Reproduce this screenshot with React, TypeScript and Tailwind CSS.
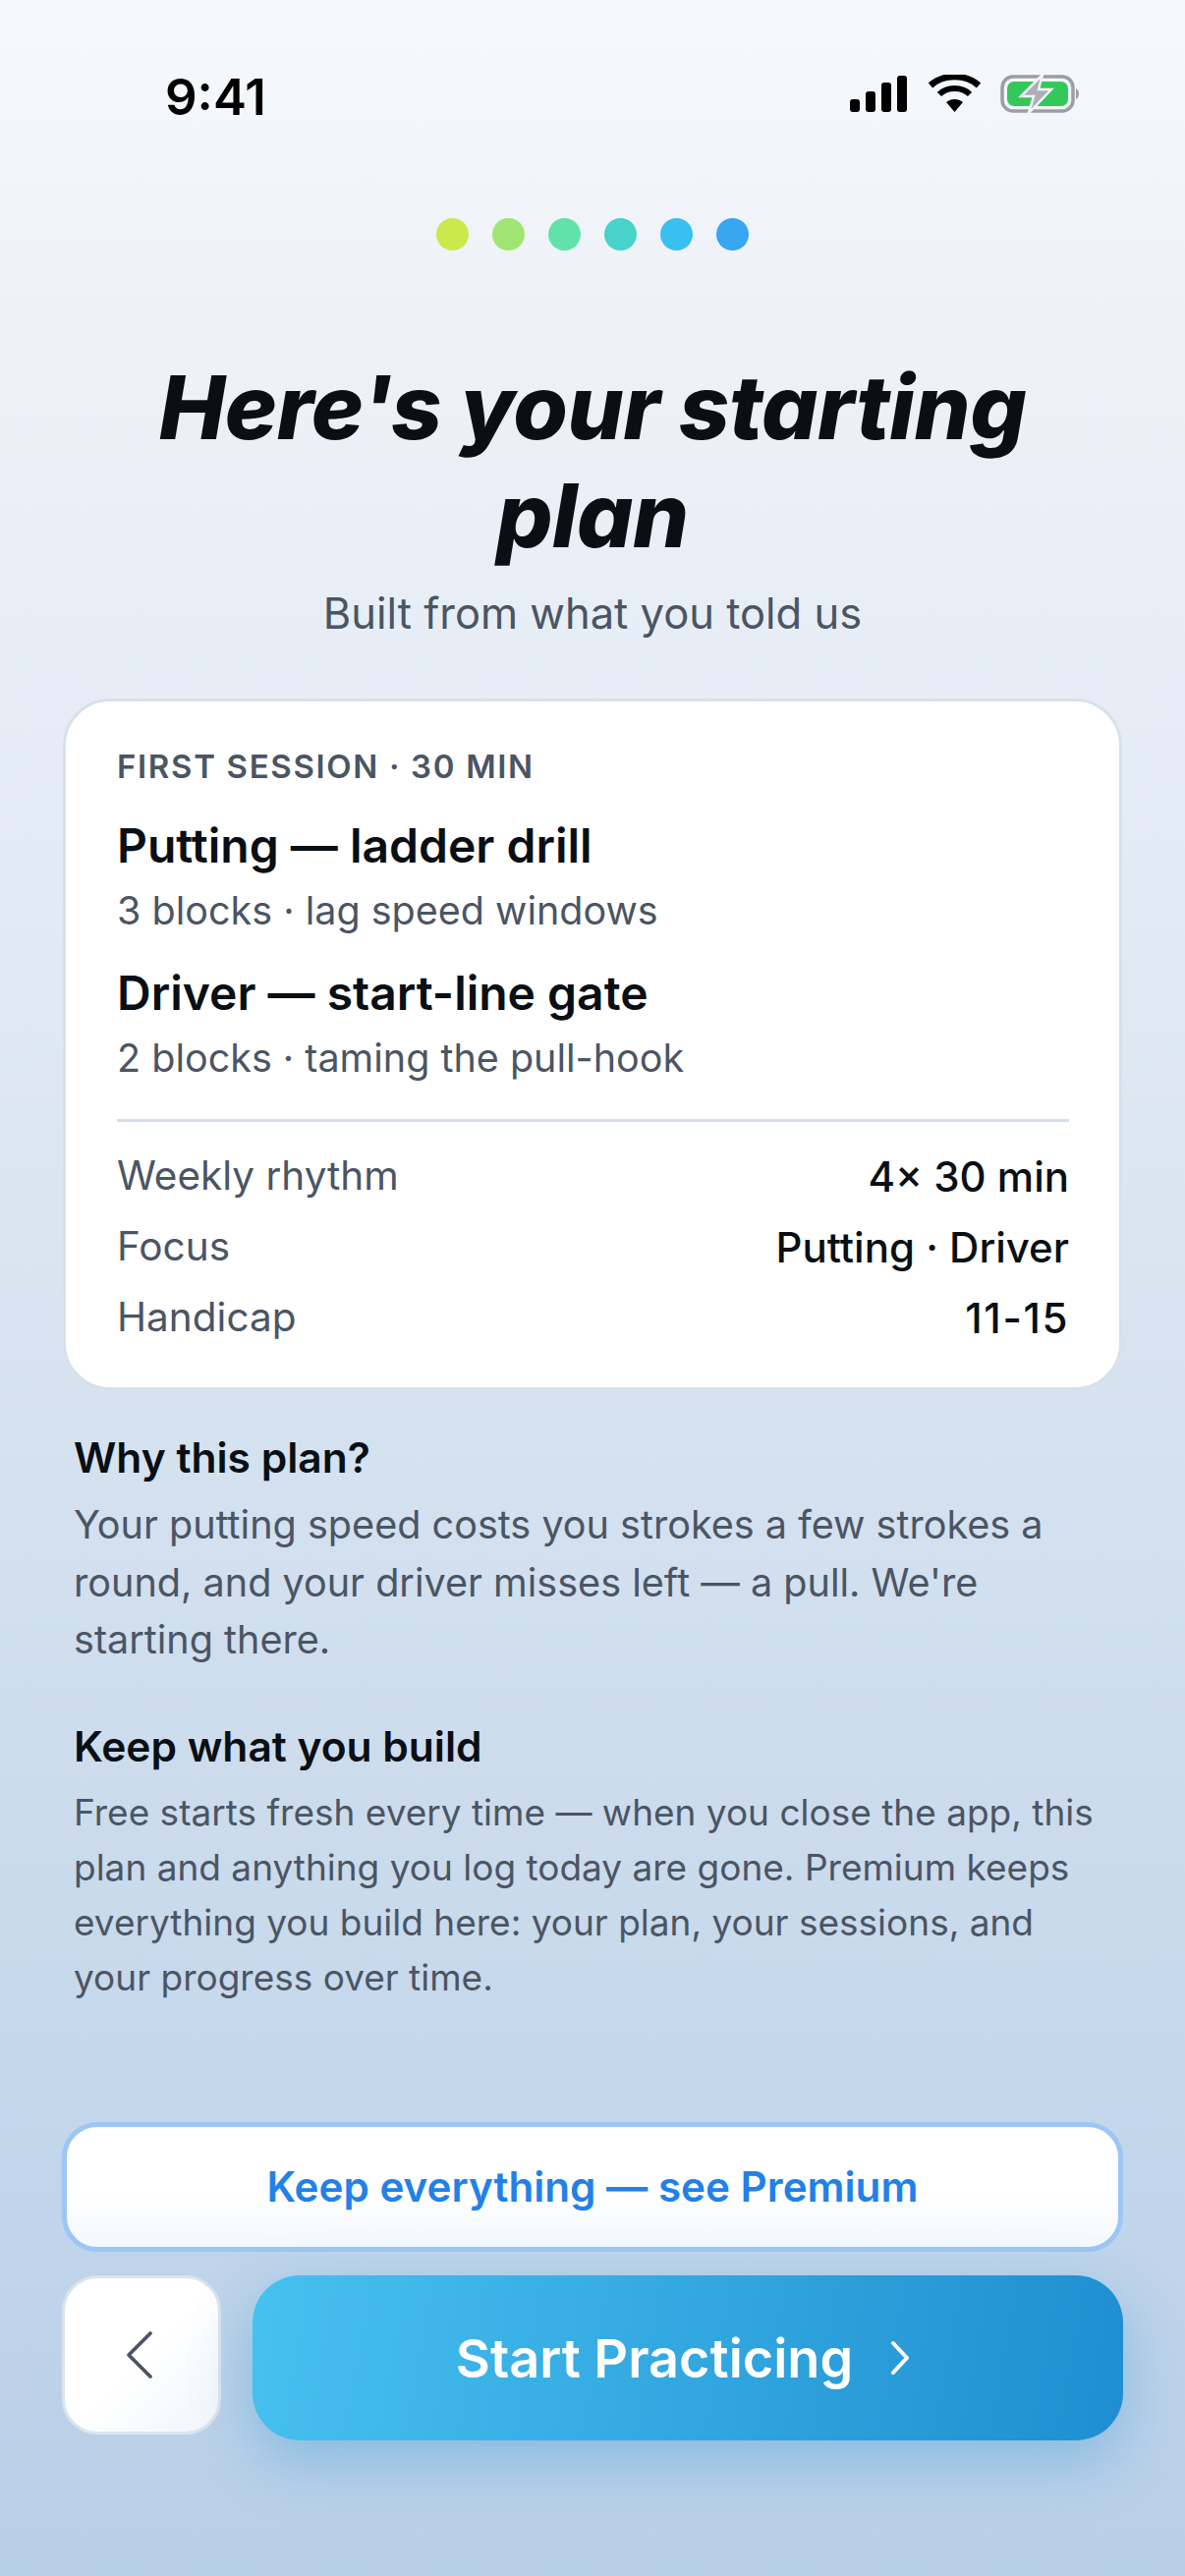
export default function App() {
  const Row = ({ l, r, extra = "" }: { l: string; r: string; extra?: string }) => (
    <div className="flex h-[72px] items-center justify-between">
      <span className="text-[40.5px] text-[#4b5563]">{l}</span>
      <span className={`text-[42px] font-medium text-[#0a0f14] ${extra}`}>{r}</span>
    </div>
  );
  return (
    <div className="flex h-[2622px] w-[1206px] flex-col overflow-hidden bg-[linear-gradient(180deg,#f6f9fc_0%,#eef2f8_12%,#e2eaf4_35%,#cfdeee_65%,#b8cfe8_100%)] font-['Inter',sans-serif] text-[#0a0f14] [font-optical-sizing:none]">
      <div className="relative flex h-[222px] shrink-0 items-start justify-between pl-[168px] pr-[105px] pt-[68px]">
        <span className="text-[51px] font-semibold leading-[62px] text-black">9:41</span>
        <svg width="236" height="44" viewBox="0 0 236 44" className="mt-[8px]">
          <rect x="0" y="25" width="10" height="13" rx="3" fill="#000" />
          <rect x="16" y="17" width="10" height="21" rx="3" fill="#000" />
          <rect x="32" y="8" width="10" height="30" rx="3" fill="#000" />
          <rect x="48" y="1" width="10" height="37" rx="3" fill="#000" />
          <path d="M82 11 C95 -1 118 -1 131 11" fill="none" stroke="#000" strokeWidth="6.5" />
          <path d="M91 20 C99 12 114 12 122 20" fill="none" stroke="#000" strokeWidth="6" />
          <path d="M98 28 C103 24 110 24 115 28 L106.5 38 Z" fill="#000" />
          <rect x="155" y="2" width="72" height="35" rx="11" fill="none" stroke="#9b9ea2" strokeWidth="3.5" />
          <rect x="160" y="7" width="62" height="25" rx="7" fill="#34c759" />
          <path d="M230 14 C234 16 234 23 230 25 Z" fill="#9b9ea2" />
          <path d="M196 0 L174 22 H187 L182 39 L205 15 H192 Z" fill="#adafb3" stroke="#f2f5fa" strokeWidth="2.5" />
        </svg>
      </div>

      <div className="flex h-[66px] shrink-0 items-start justify-center gap-[24px]">
        {["bg-[#c9ea4c]", "bg-[#a0e571]", "bg-[#61e2ab]", "bg-[#47d2ca]", "bg-[#3ac0f0]", "bg-[#38a6f0]"].map((c) => (
          <span key={c} className={`h-[33px] w-[33px] rounded-full ${c}`} />
        ))}
      </div>

      <h1 className="mt-[72px] w-full text-center text-[90px] font-extrabold italic leading-[110px] tracking-[-0.45px] text-[#0a0f14] [font-variation-settings:'opsz'_30]">
        Here's your starting
        <br />
        plan
      </h1>
      <p className="mt-[13px] text-center text-[43.5px] leading-[62px] text-[#4b5563]">Built from what you told us</p>

      <div className="mx-[64px] mt-[56px] h-[704px] shrink-0 rounded-[48px] border-[3px] border-[#d8e1ea] bg-white pl-[52px] pr-[51px] pt-[42px]">
        <div className="text-[33px] font-semibold leading-[48px] tracking-[1.65px] text-[#4b5563]">FIRST SESSION · 30 MIN</div>
        <div className="mt-[26px] text-[48px] font-semibold leading-[62px]">Putting — ladder drill</div>
        <div className="mt-[7px] text-[39.5px] leading-[56px] text-[#4b5563]">3 blocks · lag speed windows</div>
        <div className="mt-[25px] text-[48px] font-semibold leading-[62px]">Driver — start-line gate</div>
        <div className="mt-[7px] text-[39.5px] leading-[56px] text-[#4b5563]">2 blocks · taming the pull-hook</div>
        <div className="mt-[34px] border-t-[3px] border-[#d5dfe9] pt-[19px]">
          <Row l="Weekly rhythm" r="4× 30 min" />
          <Row l="Focus" r="Putting · Driver" />
          <Row l="Handicap" r="11-15" extra="tracking-[1.6px]" />
        </div>
      </div>

      <div className="mx-[75px] mt-[39px]">
        <h2 className="text-[42.5px] font-semibold leading-[60px]">Why this plan?</h2>
        <p className="mt-[9px] text-[39.6px] leading-[58.5px] text-[#4b5563]">
          Your putting speed costs you strokes a few strokes a round, and your driver misses left — a pull. We're starting there.
        </p>
        <h2 className="mt-[49px] text-[42.5px] font-semibold leading-[60px]">Keep what you build</h2>
        <p className="mt-[9px] text-[37px] leading-[56px] text-[#4b5563]">
          Free starts fresh every time — when you close the app, this plan and anything you log today are gone. Premium keeps everything you build here: your plan, your sessions, and your progress over time.
        </p>
      </div>

      <div className="mt-auto flex flex-col gap-[24px] px-[63px] pb-[138px]">
        <button className="flex h-[132px] items-center justify-center rounded-[36px] border-[5px] border-[#9cc6f5] bg-[linear-gradient(180deg,#ffffff_55%,#f3f8fc_100%)] text-[42.2px] font-semibold text-[#2181e8]">
          Keep everything — see Premium
        </button>
        <div className="flex items-start gap-[32px]">
          <button className="flex h-[162px] w-[162px] shrink-0 items-center justify-center rounded-[36px] border-[3px] border-[#dbe4ec] bg-[linear-gradient(135deg,#ffffff_50%,#f1f6fb_100%)] pr-[4px] text-[#4b5563]">
            <svg width="34" height="54" viewBox="0 0 34 54" fill="none" stroke="currentColor" strokeWidth="3.8" strokeLinecap="round" strokeLinejoin="round">
              <path d="M28 5 L6 27 L28 49" />
            </svg>
          </button>
          <button className="flex h-[168px] flex-1 items-center justify-center gap-[38px] rounded-[48px] bg-[linear-gradient(100deg,#47c1f0_0%,#1e8ed0_100%)] pr-[10px] text-[54px] font-semibold text-white shadow-[0_20px_60px_rgba(30,142,208,0.35)]">
            Start Practicing
            <svg width="20" height="34" viewBox="0 0 20 34" fill="none" stroke="currentColor" strokeWidth="4" strokeLinecap="round" strokeLinejoin="round">
              <path d="M3 2 L17 17 L3 32" />
            </svg>
          </button>
        </div>
      </div>
    </div>
  );
}
